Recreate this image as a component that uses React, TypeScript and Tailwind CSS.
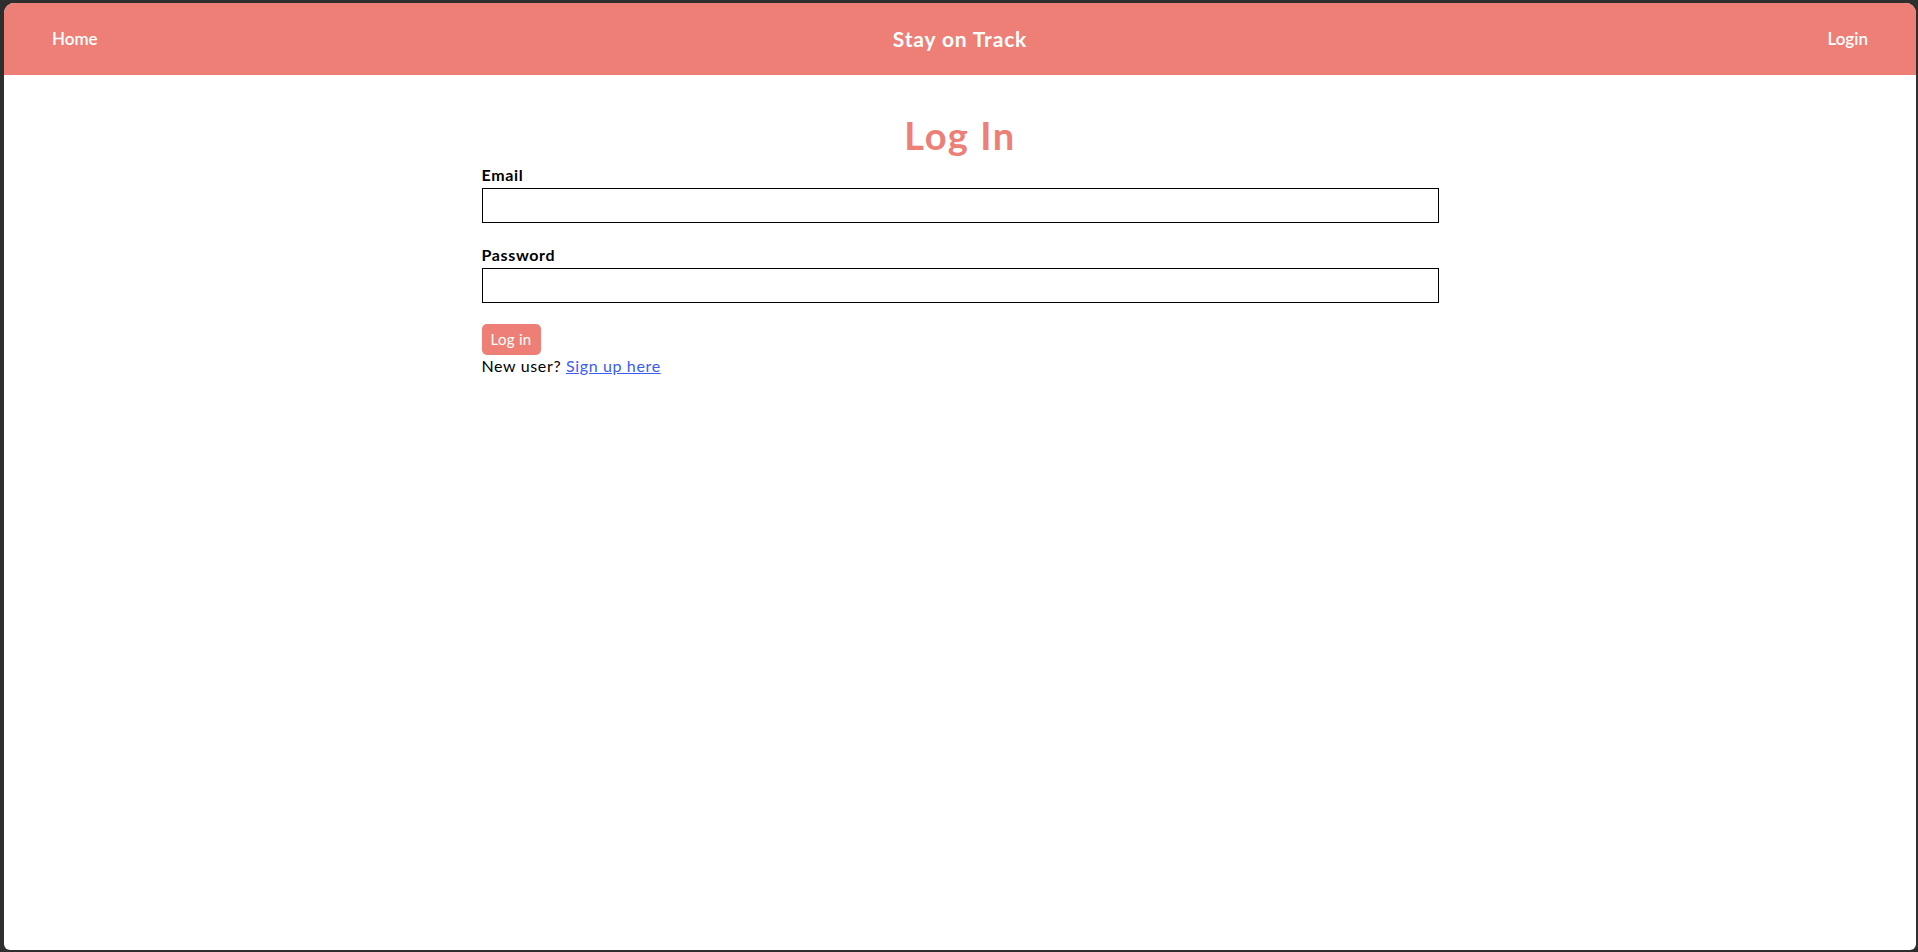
export default function App() {
  return (
    <div className="h-screen bg-[#2e2e2e] pt-[3px] pl-[4px] pr-[2px] pb-[2px] font-['Lato',sans-serif]">
      <div className="h-full bg-white rounded-t-[10px] rounded-b-[6px] overflow-hidden flex flex-col">
        {/* Nav */}
        <header className="h-[72px] shrink-0 bg-[#ed7f76] grid grid-cols-3 items-center px-12 text-white">
          <a href="#" className="justify-self-start text-[17px] font-semibold">Home</a>
          <span className="justify-self-center text-[21px] font-bold tracking-[0.04em]">Stay on Track</span>
          <a href="#" className="justify-self-end text-[17px] font-semibold">Login</a>
        </header>

        {/* Form */}
        <main className="w-[957px] mx-auto tracking-[0.04em]">
          <h1 className="mt-[38px] text-center text-[38px] leading-[44px] font-bold tracking-[0.04em] text-[#ed7f76]">Log In</h1>
          <form className="mt-[8px] flex flex-col" onSubmit={(e) => e.preventDefault()}>
            <label htmlFor="email" className="text-[16px] leading-[20px] font-bold text-black">Email</label>
            <input id="email" type="email" className="mt-[3px] h-[35px] border border-black px-2 outline-none" />

            <label htmlFor="password" className="mt-[22px] text-[16px] leading-[20px] font-bold text-black">Password</label>
            <input id="password" type="password" className="mt-[3px] h-[35px] border border-black px-2 outline-none" />

            <button type="submit" className="mt-[21px] self-start h-[31px] w-[59px] rounded-[5px] bg-[#ed7f76] text-white text-[15px] tracking-[0.02em]">
              Log in
            </button>
          </form>
          <p className="mt-[1px] text-[16px] leading-[20px] text-black">
            New user? <a href="#" className="text-[#3a5cf5] underline">Sign up here</a>
          </p>
        </main>
      </div>
    </div>
  );
}
